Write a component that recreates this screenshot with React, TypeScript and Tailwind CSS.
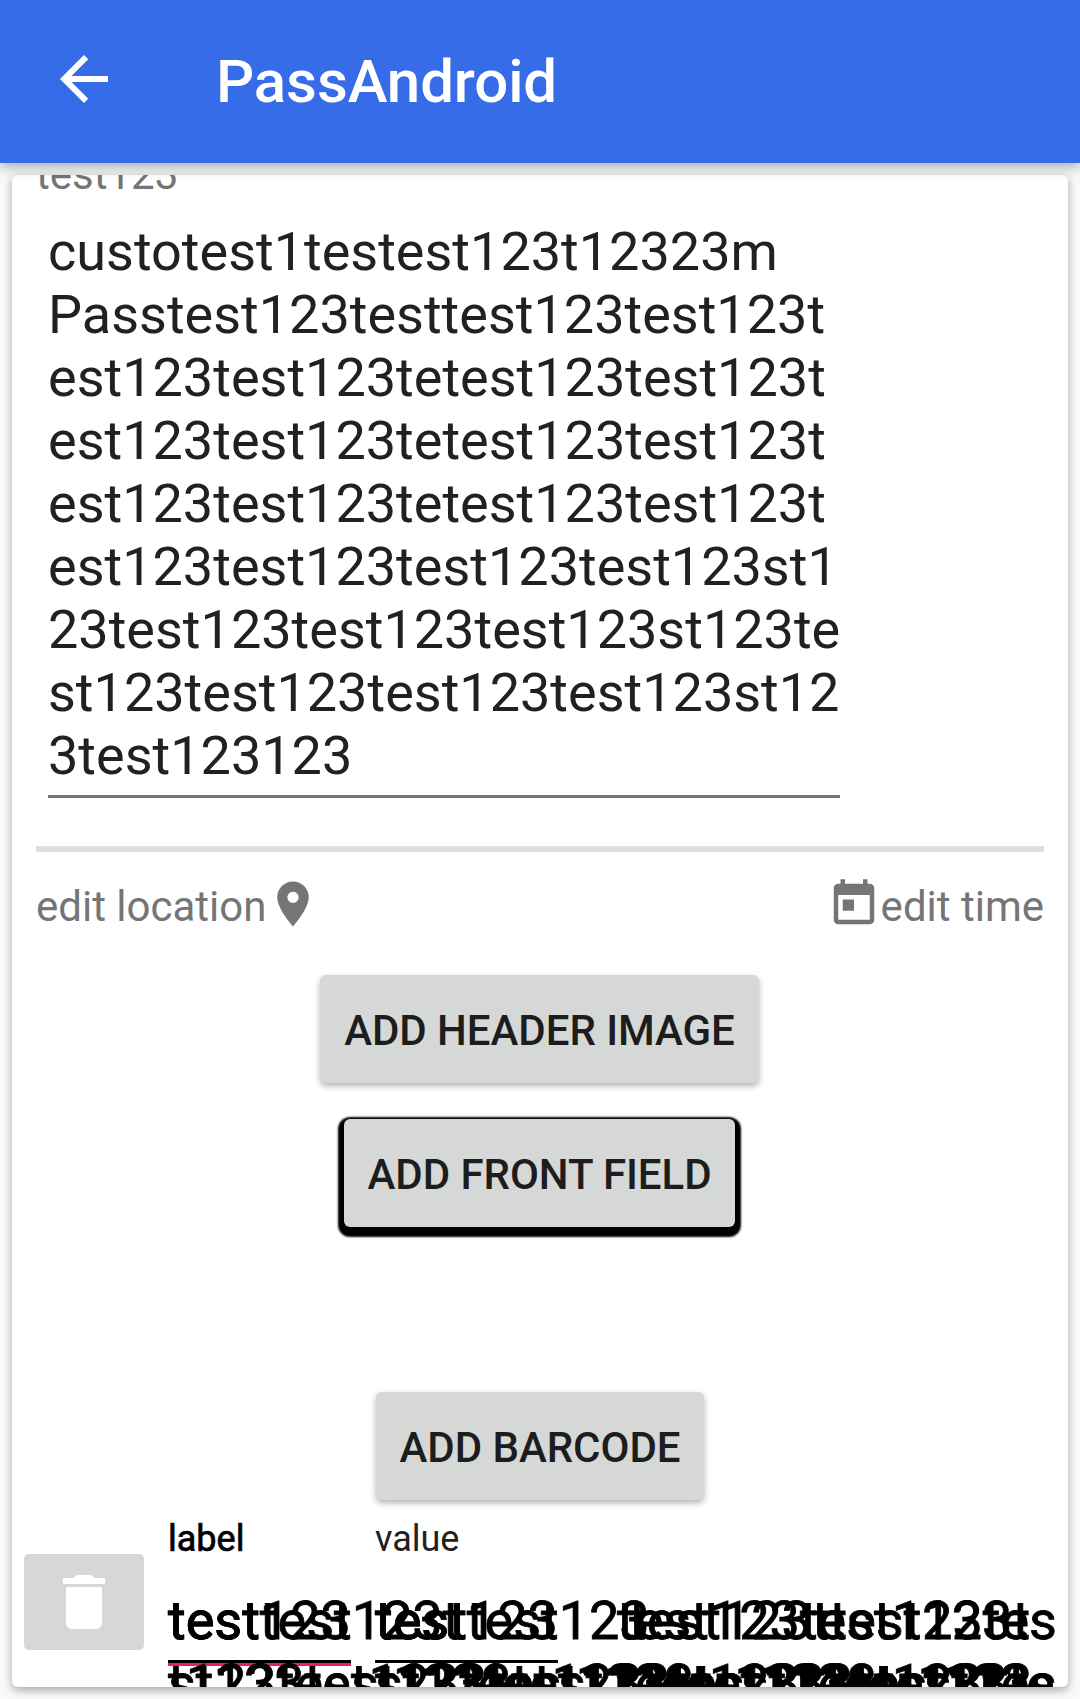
import React from "react";

const title = [
  "custotest1testest123t12323m",
  "Passtest123testtest123test123t",
  "est123test123tetest123test123t",
  "est123test123tetest123test123t",
  "est123test123tetest123test123t",
  "est123test123test123test123st1",
  "23test123test123test123st123te",
  "st123test123test123test123st12",
  "3test123123",
];

const repeat = "test123";

type Layer = { className: string; lines: string[] };

// Field values overflow their boxes and pile up on top of each other.
const layers: Layer[] = [
  { className: "left-0", lines: [repeat, "t123test123test123test123test123te"] },
  { className: "left-0", lines: ["testtest123t", "st123test123test123test123test12"] },
  { className: "left-[207px]", lines: [repeat, "t123test123test123test123"] },
  { className: "left-[207px]", lines: ["testtest123", "st123test123test123test12"] },
  { className: "left-[449px]", lines: ["test123test123tes", "test123test123tes"] },
  { className: "left-[461px]", lines: ["test123ttest123t"] },
];

function Button({ children, className }: { children: React.ReactNode; className: string }) {
  return (
    <button
      className={`h-[108px] shrink-0 rounded-[6px] bg-[#d6d8d7] pt-[2px] text-center text-[42px] leading-[49px] font-medium tracking-[-0.05px] whitespace-nowrap text-[#1d1d1d] ${className}`}
    >
      {children}
    </button>
  );
}

export default function App() {
  return (
    <div className="flex h-[1699px] w-[1080px] flex-col overflow-hidden bg-[#fafafa] font-['Roboto',sans-serif]">
      <header className="z-10 flex h-[163px] shrink-0 items-center bg-[#366ce8] pb-[5px] pl-12 shadow-[0_4px_12px_rgba(0,0,0,0.32)]">
        <svg viewBox="0 0 24 24" className="size-[72px] fill-white">
          <path d="M20 11H7.83l5.59-5.59L12 4l-8 8 8 8 1.41-1.41L7.83 13H20v-2z" />
        </svg>
        <h1 className="mt-[5px] ml-[96px] text-[60px] leading-[70px] font-medium tracking-[-0.1px] text-white">PassAndroid</h1>
      </header>

      <main className="mx-3 mt-3 flex h-[1512px] shrink-0 flex-col rounded-[6px] bg-white shadow-[0_3px_10px_rgba(0,0,0,0.36)]">
        <div className="flex h-full flex-col overflow-hidden rounded-[6px]">
          <div className="mt-[-25px] ml-6 h-[49px] shrink-0 text-[42px] leading-[49px] text-[#757575]">test123</div>

          <div className="mt-[21px] ml-9 w-[792px] shrink-0 border-b-[3px] border-[#757575] pb-2 text-[54px] leading-[63px] whitespace-nowrap text-[#212121]">
            {title.map((line, i) => (
              <div key={i}>{line}</div>
            ))}
          </div>

          <div className="mx-6 mt-12 h-[6px] shrink-0 bg-[#dfdfdf]" />

          <div className="mx-6 mt-6 flex h-[60px] shrink-0 items-start justify-between text-[42px] leading-[49px] text-[#757575]">
            <div className="flex">
              <span className="mt-[6px]">edit location</span>
              <svg viewBox="0 0 24 24" className="mt-px size-[54px] fill-[#757575]">
                <path d="M12 2C8.13 2 5 5.13 5 9c0 5.25 7 13 7 13s7-7.75 7-13c0-3.87-3.13-7-7-7zm0 9.5c-1.38 0-2.5-1.12-2.5-2.5s1.12-2.5 2.5-2.5 2.5 1.12 2.5 2.5-1.12 2.5-2.5 2.5z" />
              </svg>
            </div>
            <div className="flex">
              <svg viewBox="0 0 24 24" className="mt-px size-[54px] fill-[#757575]">
                <path d="M19 3h-1V1h-2v2H8V1H6v2H5c-1.11 0-1.99.9-1.99 2L3 19c0 1.1.89 2 2 2h14c1.1 0 2-.9 2-2V5c0-1.1-.9-2-2-2zm0 16H5V8h14v11zM7 10h5v5H7z" />
              </svg>
              <span className="mt-[6px]">edit time</span>
            </div>
          </div>

          <div className="flex shrink-0 flex-col items-center">
            <Button className="mt-[39px] mr-px w-[439px] shadow-[0_3px_6px_rgba(0,0,0,0.3)]">ADD HEADER IMAGE</Button>
            <Button className="mt-9 mr-px w-[391px] shadow-[0_4px_2px_6px_#000]">ADD FRONT FIELD</Button>
            <Button className="mt-[165px] w-[328px] shadow-[0_3px_6px_rgba(0,0,0,0.3)]">ADD BARCODE</Button>
          </div>

          <div className="flex shrink-0 pl-3">
            <div className="mt-[54px] flex h-24 w-[120px] items-center justify-center rounded-[5px] bg-[#d6d8d7]">
              <svg viewBox="0 0 24 24" className="size-[72px] fill-white">
                <path d="M6 19c0 1.1.9 2 2 2h8c1.1 0 2-.9 2-2V7H6v12zM19 4h-3.5l-.6-.6c-.3-.3-.6-.4-1-.4h-3.8c-.4 0-.7.1-1 .4l-.6.6H5v2h14V4z" />
              </svg>
            </div>
            <div className="relative mt-[18px] ml-6 h-[190px] flex-1">
              <div className="flex text-[36px] leading-[42px]">
                <span className="w-[207px] text-black [-webkit-text-stroke:0.7px_black]">label</span>
                <span className="text-[#212121]">value</span>
              </div>
              <div className="mt-[100px] flex gap-6">
                <div className="h-[6px] w-[183px] border-t-[3px] border-black bg-[#e91e63]" />
                <div className="h-[3px] w-[183px] bg-black" />
              </div>
              {layers.map((layer, i) => (
                <div
                  key={i}
                  className={`absolute top-[71px] text-[54px] leading-[63px] whitespace-nowrap text-black [-webkit-text-stroke:0.8px_black] ${layer.className}`}
                >
                  {layer.lines.map((line, j) => (
                    <div key={j}>{line}</div>
                  ))}
                </div>
              ))}
            </div>
          </div>
        </div>
      </main>
    </div>
  );
}
